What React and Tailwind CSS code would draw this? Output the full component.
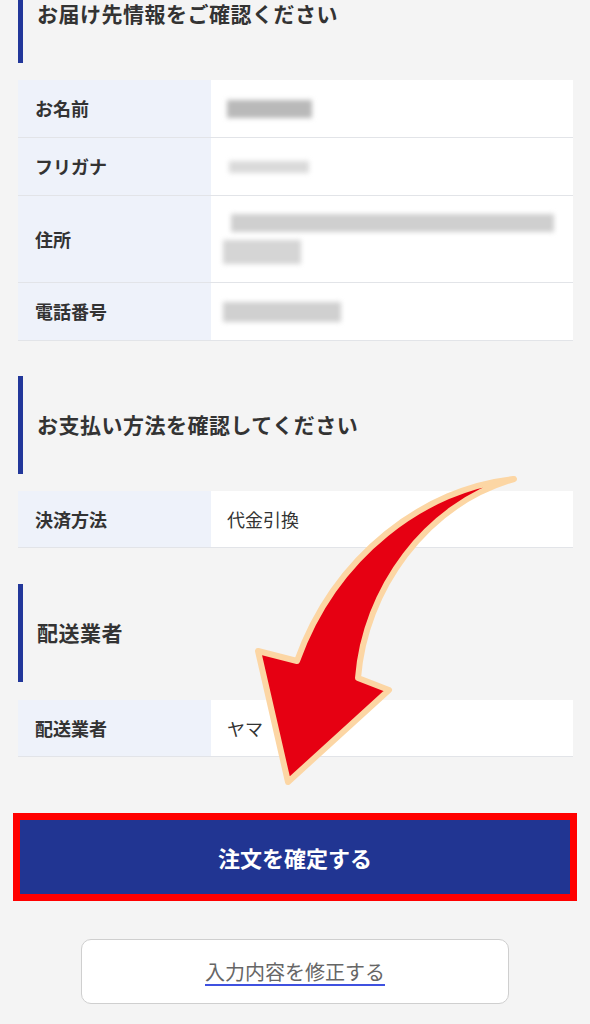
import React from "react";

const font = { fontFamily: '"Noto Sans CJK JP", "Noto Sans", sans-serif' };

function SectionHeader({ title, className = "" }) {
  return (
    <div className={`mx-[18px] h-[98px] flex items-center border-l-[5px] border-[#22379a] pl-[14px] ${className}`}>
      <h2 className="text-[21px] leading-[1.2] font-bold text-[#333] tracking-[0.5px]">{title}</h2>
    </div>
  );
}

function Blur({ className }) {
  return <div className={`blur-[2.5px] ${className}`} />;
}

function Row({ label, height = "h-[58px]", children }) {
  return (
    <div className={`flex ${height} border-b border-[#e2e4e8]`}>
      <div className="w-[193px] shrink-0 bg-[#eef2fa] flex items-center pl-[17px] text-[18px] font-bold text-[#333]">
        {label}
      </div>
      <div className="flex-1 bg-white flex items-center pl-[16px] text-[18px] text-[#333]">
        {children}
      </div>
    </div>
  );
}

function Arrow() {
  return (
    <svg className="absolute inset-0 pointer-events-none" width="590" height="1024" viewBox="0 0 590 1024">
      <path
        d="M514,479 C425,488 335,555 297,661 L258,651 L288,782 L389,690 L358,678 C365,590 425,505 514,479 Z"
        fill="#e60012"
        stroke="#fcd6a4"
        strokeWidth="6"
        strokeLinejoin="round"
      />
    </svg>
  );
}

export default function App() {
  return (
    <div className="relative w-[590px] h-[1024px] overflow-hidden bg-[#f4f4f4]" style={font}>
      <SectionHeader title="お届け先情報をご確認ください" className="-mt-[35px]" />

      <div className="mr-[17px] ml-[18px] mt-[17px]">
        <Row label="お名前">
          <Blur className="w-[85px] h-[18px] bg-[#b9b9b9]" />
        </Row>
        <Row label="フリガナ">
          <Blur className="w-[80px] h-[12px] bg-[#dadada] ml-[2px]" />
        </Row>
        <Row label="住所" height="h-[87px]">
          <div className="flex flex-col gap-[8px] -ml-[4px]">
            <Blur className="w-[323px] h-[18px] ml-[8px] bg-[#cfcfcf]" />
            <Blur className="w-[78px] h-[24px] bg-[#d5d5d5]" />
          </div>
        </Row>
        <Row label="電話番号">
          <Blur className="w-[118px] h-[20px] -ml-[4px] bg-[#d0d0d0]" />
        </Row>
      </div>

      <SectionHeader title="お支払い方法を確認してください" className="mt-[35px]" />
      <div className="mr-[17px] ml-[18px] mt-[17px]">
        <Row label="決済方法" height="h-[57px]">代金引換</Row>
      </div>

      <SectionHeader title="配送業者" className="mt-[36px]" />
      <div className="mr-[17px] ml-[18px] mt-[18px]">
        <Row label="配送業者" height="h-[57px]">ヤマ</Row>
      </div>

      <div className="mx-[13px] mt-[56px] border-[7px] border-[#ff0000]">
        <button className="w-full h-[74px] bg-[#213592] text-white text-[22px] font-bold flex items-center justify-center">
          注文を確定する
        </button>
      </div>

      <div className="flex justify-center mt-[38px]">
        <button className="w-[428px] h-[65px] bg-white border border-[#cfcfcf] rounded-[10px] flex items-center justify-center">
          <span className="text-[20px] text-[#666] underline decoration-[#3f51e0] decoration-[1.5px] underline-offset-[4px]">入力内容を修正する</span>
        </button>
      </div>

      <Arrow />
    </div>
  );
}
